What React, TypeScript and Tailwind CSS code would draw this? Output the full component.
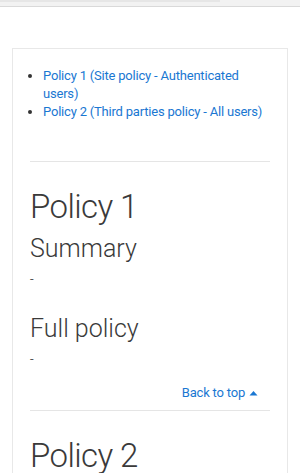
import React from "react";

const App: React.FC = () => {
  const items = [
    "Policy 1 (Site policy - Authenticated users)",
    "Policy 2 (Third parties policy - All users)",
  ];

  return (
    <div className="min-h-screen bg-white font-['Roboto',sans-serif] text-[#3a3a3a]">
      {/* top strip */}
      <div className="h-[7px] bg-[#f2f2f2] border-b border-[#d9d9d9]">
        <div className="w-[220px] h-[2px] bg-[#e6e6e6]" />
      </div>

      <div className="pt-[41px] px-[12px]">
        <div className="border border-[#e8e8e8] border-b-0 px-[17px] pt-[18px]">
          {/* index */}
          <ul className="list-disc pl-[13px] text-[13px] leading-[18px] tracking-[-0.2px] text-[#1a77d2]">
            {items.map((item) => (
              <li key={item} className="marker:text-[#333]">
                <a href="#">{item}</a>
              </li>
            ))}
          </ul>

          <hr className="mt-[40px] border-[#e5e5e5]" />

          {/* policy 1 */}
          <h2 className="mt-[26px] text-[33px] leading-[38px] tracking-[-0.6px] font-light">Policy 1</h2>
          <h3 className="mt-[8px] text-[25px] leading-[30px] font-light">Summary</h3>
          <p className="mt-[6px] text-[13px] leading-[18px] text-[#555]">-</p>
          <h3 className="mt-[26px] text-[25px] leading-[30px] font-light">Full policy</h3>
          <p className="mt-[6px] text-[13px] leading-[18px] text-[#555]">-</p>

          <div className="mt-[16px] flex justify-end pr-[12px]">
            <a href="#" className="text-[13px] leading-[18px] tracking-[-0.2px] text-[#1a77d2] flex items-center gap-[4px]">
              Back to top
              <svg width="9" height="6" viewBox="0 0 9 6" fill="currentColor">
                <path d="M0.5 5.5 L4.5 1 L8.5 5.5 Z" />
              </svg>
            </a>
          </div>

          <hr className="mt-[8px] border-[#e5e5e5]" />

          {/* policy 2 */}
          <h2 className="mt-[26px] text-[33px] leading-[38px] tracking-[-0.6px] font-light">Policy 2</h2>
        </div>
      </div>
    </div>
  );
};

export default App;
